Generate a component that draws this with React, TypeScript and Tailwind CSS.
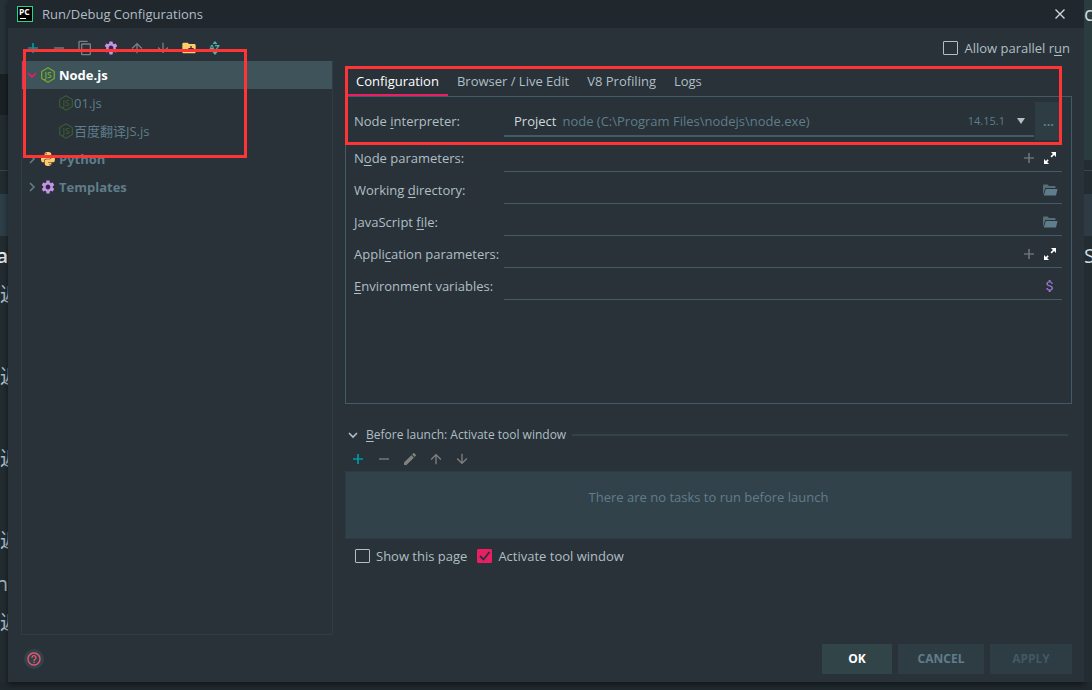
import React, { useState } from "react"
import { FaPython } from "react-icons/fa"
import {
  MdArrowDownward,
  MdArrowUpward,
  MdAttachMoney,
  MdContentCopy,
  MdCreateNewFolder,
  MdEdit,
  MdHelpOutline,
  MdSettings,
} from "react-icons/md"

type IconProps = { className?: string }

const PlusIcon = ({ className }: IconProps) => (
  <svg viewBox="0 0 16 16" className={"w-4 h-4 " + (className || "")}>
    <path d="M8 3v10M3 8h10" stroke="currentColor" strokeWidth="1.7" />
  </svg>
)

const MinusIcon = ({ className }: IconProps) => (
  <svg viewBox="0 0 16 16" className={"w-4 h-4 " + (className || "")}>
    <path d="M3 8h10" stroke="currentColor" strokeWidth="1.7" />
  </svg>
)

const Chevron = ({ open, className }: { open?: boolean } & IconProps) => (
  <svg viewBox="0 0 16 16" className={"w-4 h-4 shrink-0 " + (className || "")}>
    <path
      d={open ? "M4 6l4 4 4-4" : "M6 4l4 4-4 4"}
      fill="none"
      stroke="currentColor"
      strokeWidth="1.6"
    />
  </svg>
)

// thin outlined hexagon around the JS monogram
const NodeIcon = ({ className }: IconProps) => (
  <svg viewBox="0 0 16 16" className={"w-4 h-4 shrink-0 " + (className || "")}>
    <path
      d="M8 .8l6.300 3.600v7.200L8 15.200l-6.300-3.600V4.400z"
      fill="none"
      stroke="currentColor"
      strokeWidth="1.2"
      strokeLinejoin="round"
    />
    <text
      x="8"
      y="11.300"
      textAnchor="middle"
      fontSize="8.500"
      fontFamily="Open Sans, sans-serif"
      fontWeight="600"
      fill="currentColor"
    >
      JS
    </text>
  </svg>
)

const PyCharmLogo = () => (
  <svg viewBox="0 0 16 16" className="w-4 h-4">
    <rect x="0.5" y="0.5" width="15" height="15" fill="#000" stroke="#21d789" />
    <text
      x="2"
      y="9"
      fontSize="8.5"
      fontWeight="700"
      fontFamily="Open Sans, sans-serif"
      fill="#fff"
    >
      PC
    </text>
    <path d="M3 12.5h6" stroke="#fff" />
  </svg>
)

const SortIcon = () => (
  <svg viewBox="0 0 16 16" className="w-4 h-4 text-[#4db6ac]">
    <path d="M5.5 4L8 1l2.5 3zM5.5 12L8 15l2.5-3z" fill="currentColor" />
    <text
      x="2"
      y="11"
      fontSize="8.5"
      fontWeight="700"
      fontFamily="Open Sans, sans-serif"
      fill="currentColor"
    >
      AZ
    </text>
  </svg>
)

const ExpandIcon = () => (
  <svg viewBox="0 0 16 16" className="w-4 h-4 text-white">
    <path
      d="M9 2h5v5l-1.900-1.900-2.400 2.400-1.200-1.200 2.400-2.400zM7 14H2V9l1.900 1.900 1.600-1.600 1.200 1.200-1.600 1.600z"
      fill="currentColor"
    />
  </svg>
)

const FolderIcon = () => (
  <svg viewBox="0 0 16 16" className="w-4 h-4">
    <path d="M1 13V3.2q0-.7.7-.7h4l1.300 1.500h5.800q.7 0 .7.7V6H3.300z" fill="#546e7a" />
    <path d="M3.800 7h11.700l-1.500 6.500H1.800z" fill="#607d8b" />
  </svg>
)

const iconButton = "w-4 h-4 flex items-center justify-center"

const TreeToolbar = () => (
  <div className="flex items-center gap-[10px] h-[33px] pt-[7px] pl-1">
    <button aria-label="Add" className={iconButton}>
      <PlusIcon className="text-[#0097a7]" />
    </button>
    <button aria-label="Remove" className={iconButton}>
      <MinusIcon className="text-[#6a7073]" />
    </button>
    <button aria-label="Copy" className={iconButton}>
      <MdContentCopy size={16} className="text-[#7a7f82]" />
    </button>
    <button aria-label="Edit templates" className={iconButton}>
      <MdSettings size={16} className="text-[#c792ea]" />
    </button>
    <button aria-label="Move up" className={iconButton}>
      <MdArrowUpward size={16} className="text-[#7a7f82]" />
    </button>
    <button aria-label="Move down" className={iconButton}>
      <MdArrowDownward size={16} className="text-[#7a7f82]" />
    </button>
    <button aria-label="New folder" className={iconButton}>
      <MdCreateNewFolder size={16} className="text-[#ffcb6b]" />
    </button>
    <button aria-label="Sort" className={iconButton}>
      <SortIcon />
    </button>
  </div>
)

const ConfigTree = () => (
  <ul className="flex-1 mb-[1px] border border-t-0 border-[#2d3c46] text-[#607d8b]">
    <li>
      <button className="flex items-center w-full h-7 bg-[#3f535b] border-l-2 border-[#c2386e] text-white font-bold">
        <Chevron open className="text-[#e91e63]" />
        <NodeIcon className="mr-[3px] text-[#72b02a]" />
        Node.js
      </button>
      <ul>
        {["01.js", "百度翻译JS.js"].map((name) => (
          <li key={name}>
            <button className="flex items-center w-full h-7 pl-9">
              <NodeIcon className="text-[#3d5a33]" />
              {name}
            </button>
          </li>
        ))}
      </ul>
    </li>
    <li>
      <button className="flex items-center w-full h-7 pl-[2px] font-bold">
        <Chevron />
        <FaPython size={16} className="mr-[3px] text-[#ffcb6b]" />
        Python
      </button>
    </li>
    <li>
      <button className="flex items-center w-full h-7 pl-[2px] font-bold">
        <Chevron />
        <MdSettings size={16} className="mr-[3px] text-[#c792ea]" />
        Templates
      </button>
    </li>
  </ul>
)

type CheckProps = {
  id: string
  initial?: boolean
  children: React.ReactNode
}

const CheckBox = ({ id, initial = false, children }: CheckProps) => {
  const [checked, setChecked] = useState<boolean>(initial)
  return (
    <div className="flex items-center gap-[6px]">
      <span className="grid w-[15px] h-[14px]">
        <input
          id={id}
          type="checkbox"
          checked={checked}
          onChange={() => setChecked(!checked)}
          className="col-start-1 row-start-1 appearance-none border border-[#b0bec5] rounded-[1px] checked:bg-[#e91e63] checked:border-[#e91e63]"
        />
        {checked && (
          <svg
            viewBox="0 0 15 14"
            className="col-start-1 row-start-1 pointer-events-none"
          >
            <path
              d="M3 7l3.500 3.500L12.500 3"
              fill="none"
              stroke="#263238"
              strokeWidth="1.8"
            />
          </svg>
        )}
      </span>
      <label htmlFor={id}>{children}</label>
    </div>
  )
}

const tabs = ["Configuration", "Browser / Live Edit", "V8 Profiling", "Logs"]

type Field = {
  id: string
  label: [string, string, string]
  kind: "expand" | "folder" | "env"
}

// label is split around its mnemonic letter
const fields: Field[] = [
  { id: "node-params", label: ["N", "o", "de parameters:"], kind: "expand" },
  { id: "work-dir", label: ["Working ", "d", "irectory:"], kind: "folder" },
  { id: "js-file", label: ["JavaScript ", "f", "ile:"], kind: "folder" },
  { id: "app-params", label: ["Appli", "c", "ation parameters:"], kind: "expand" },
  { id: "env-vars", label: ["", "E", "nvironment variables:"], kind: "env" },
]

const FieldRow = ({ id, label, kind }: Field) => (
  <div className="flex h-8 pl-2 pr-[9px]">
    <label htmlFor={id} className="w-[150px] shrink-0 pt-[9px]">
      {label[0]}
      <u className="underline-offset-2">{label[1]}</u>
      {label[2]}
    </label>
    <div className="flex flex-1 items-center border-b border-[#435b67] pt-[5px] pr-1">
      <input id={id} className="flex-1 min-w-0 bg-transparent outline-none" />
      {kind === "expand" && (
        <>
          <button aria-label="Insert macro" className={iconButton + " mr-[5px]"}>
            <PlusIcon className="text-[#6a7073]" />
          </button>
          <button aria-label="Expand" className={iconButton}>
            <ExpandIcon />
          </button>
        </>
      )}
      {kind === "folder" && (
        <button aria-label="Browse" className={iconButton}>
          <FolderIcon />
        </button>
      )}
      {kind === "env" && (
        <button aria-label="Edit variables" className={iconButton}>
          <MdAttachMoney size={16} className="text-[#9575cd]" />
        </button>
      )}
    </div>
  </div>
)

const InterpreterRow = () => (
  <div className="flex h-[43px] pt-[5px] pl-2 pr-[9px]">
    <label htmlFor="interpreter" className="w-[150px] shrink-0 pt-[10px]">
      Node <u className="underline-offset-2">i</u>nterpreter:
    </label>
    <div className="relative flex flex-1 items-center h-[35px] pt-1 pl-[10px] pr-[9px] border-b-2 border-[#435b67] mr-[1px]">
      <span className="text-[#cfd8dc]">Project</span>
      <span className="ml-[6px] text-[#607d8b]">
        node (C:\Program Files\nodejs\node.exe)
      </span>
      <span className="ml-auto text-[11px] text-[#607d8b]">14.15.1</span>
      <svg viewBox="0 0 8 6" className="w-2 h-[6px] ml-3">
        <path d="M0 0h8L4 6z" fill="#b0bec5" />
      </svg>
      <select
        id="interpreter"
        className="absolute inset-0 w-full opacity-0 cursor-pointer"
      >
        <option>Project node (C:\Program Files\nodejs\node.exe) 14.15.1</option>
      </select>
    </div>
    <button
      aria-label="Choose interpreter"
      className="w-[27px] h-[38px] bg-[#2e3c43] text-[#607d8b] font-bold"
    >
      ...
    </button>
  </div>
)

const ConfigTabs = () => {
  const [active, setActive] = useState<string>(tabs[0])
  return (
    <>
      <div role="tablist" className="flex h-[28px] pl-[2px]">
        {tabs.map((tab) => (
          <button
            key={tab}
            role="tab"
            aria-selected={active === tab}
            onClick={() => setActive(tab)}
            className={
              "px-[9px] border-b-2 " +
              (active === tab
                ? "border-[#e91e63] text-white"
                : "border-transparent")
            }
          >
            {tab}
          </button>
        ))}
      </div>
      <div className="h-[308px] border border-[#435b67]">
        <InterpreterRow />
        {fields.map((field) => (
          <FieldRow key={field.id} {...field} />
        ))}
      </div>
    </>
  )
}

const BeforeLaunch = () => (
  <section className="pt-[19px]">
    <div className="flex items-center h-6">
      <button className="flex items-center gap-[5px] text-xs text-[#b0bec5]">
        <Chevron open />
        <span>
          <u className="underline-offset-2">B</u>efore launch: Activate tool
          window
        </span>
      </button>
      <div className="flex-1 h-[2px] ml-[6px] mr-1 bg-[#32424a]" />
    </div>
    <div className="flex items-center gap-[10px] h-6 pl-[5px]">
      <button aria-label="Add task" className={iconButton}>
        <PlusIcon className="text-[#0097a7]" />
      </button>
      <button aria-label="Remove task" className={iconButton}>
        <MinusIcon className="text-[#6a7073]" />
      </button>
      <button aria-label="Edit task" className={iconButton}>
        <MdEdit size={16} className="text-[#808080]" />
      </button>
      <button aria-label="Move task up" className={iconButton}>
        <MdArrowUpward size={16} className="text-[#808080]" />
      </button>
      <button aria-label="Move task down" className={iconButton}>
        <MdArrowDownward size={16} className="text-[#808080]" />
      </button>
    </div>
    <div className="h-[68px] pt-4 bg-[#32424a] border border-[#2d3c44] text-center text-[#607d8b]">
      There are no tasks to run before launch
    </div>
    <div className="flex gap-[10px] pt-2 pl-[10px]">
      <CheckBox id="show-page">Show this page</CheckBox>
      <CheckBox id="activate-window" initial>
        Activate tool window
      </CheckBox>
    </div>
  </section>
)

// slivers of the editor window that stay visible around the dialog
const EditorLeft = () => (
  <div className="w-2 shrink-0 overflow-hidden bg-[#222c31] text-[#b0bec5] text-xl">
    <div className="h-[74px] bg-[#263238]" />
    <div className="h-[41px] bg-[#1a2124]" />
    <div className="h-[56px] border-b border-[#37474f]" />
    <div className="h-[23px]" />
    <div className="h-[42px] bg-[#2e3f48]" />
    <div className="flex flex-col items-start">
      <span className="self-end h-[39px] leading-[40px] font-semibold text-[#eceff1]">
        a
      </span>
      <span className="h-[82px] leading-[40px]">返</span>
      <span className="h-[82px] leading-[40px]">返</span>
      <span className="h-[82px] leading-[40px]">返</span>
      <span className="h-[41px] leading-[40px]">返</span>
      <span className="self-end h-[41px] leading-[44px]">n</span>
      <span className="h-[41px] leading-[40px]">返</span>
    </div>
  </div>
)

const EditorRight = () => (
  <div className="w-2 shrink-0 overflow-hidden bg-[#222c31] text-[#cfd8dc] text-xl">
    <div className="h-[160px] bg-[#2a3c3e] leading-[28px]">c</div>
    <div className="h-[11px] border-b border-[#37474f]" />
    <div className="h-[23px]" />
    <div className="h-[42px] bg-[#2e3b45]" />
    <div className="leading-[40px]">S</div>
  </div>
)

const App = () => {
  return (
    <div className="flex flex-col min-h-screen bg-[#20292e] text-[13px] leading-[18px] text-[#b0bec5] font-['Open_Sans','Noto_Sans_CJK_SC',sans-serif]">
      <div className="flex flex-1">
        <EditorLeft />
        <main className="flex flex-col flex-1 bg-[#283238] shadow-[0_2px_6px_#0008]">
          <header className="flex items-center h-7 pl-[9px] pr-[18px] bg-[#20272d]">
            <PyCharmLogo />
            <h1 className="ml-[9px]">Run/Debug Configurations</h1>
            <button aria-label="Close" className="ml-auto w-3 h-3">
              <svg viewBox="0 0 12 12">
                <path
                  d="M1.500 1.500l9 9M10.500 1.500l-9 9"
                  stroke="#cfd8dc"
                  strokeWidth="1.4"
                />
              </svg>
            </button>
          </header>
          <div className="flex flex-1 gap-3 pl-[13px] pr-3">
            <aside className="relative flex flex-col w-[312px] shrink-0">
              <TreeToolbar />
              <ConfigTree />
              <div className="absolute left-[2px] top-[21px] w-[224px] h-[109px] border-3 border-[#ff3535] pointer-events-none" />
            </aside>
            <div className="relative flex-1">
              <div className="flex items-center justify-end h-10 pr-[2px]">
                <CheckBox id="parallel">
                  Allow parallel r<u className="underline-offset-2">u</u>n
                </CheckBox>
              </div>
              <ConfigTabs />
              <BeforeLaunch />
              <div className="absolute left-0 right-[10px] top-[38px] h-[79px] border-3 border-[#ff3535] pointer-events-none" />
            </div>
          </div>
          <footer className="flex items-center h-[46px] pl-4 pr-3 gap-[6px]">
            <button
              aria-label="Help"
              className="flex items-center justify-center w-5 h-5 mr-auto rounded-full bg-[#32424a]"
            >
              <MdHelpOutline size={16} className="text-[#f0566f]" />
            </button>
            <button className="w-[70px] h-[30px] bg-[#314549] text-white text-xs font-bold">
              OK
            </button>
            <button className="w-[86px] h-[30px] bg-[#2e3c43] text-[#607d8b] text-xs font-bold">
              CANCEL
            </button>
            <button
              disabled
              className="w-[82px] h-[30px] bg-[#2e3c43] text-[#415967] text-xs font-bold"
            >
              APPLY
            </button>
          </footer>
        </main>
        <EditorRight />
      </div>
      <div className="h-2 shrink-0" />
    </div>
  )
}

export default App
